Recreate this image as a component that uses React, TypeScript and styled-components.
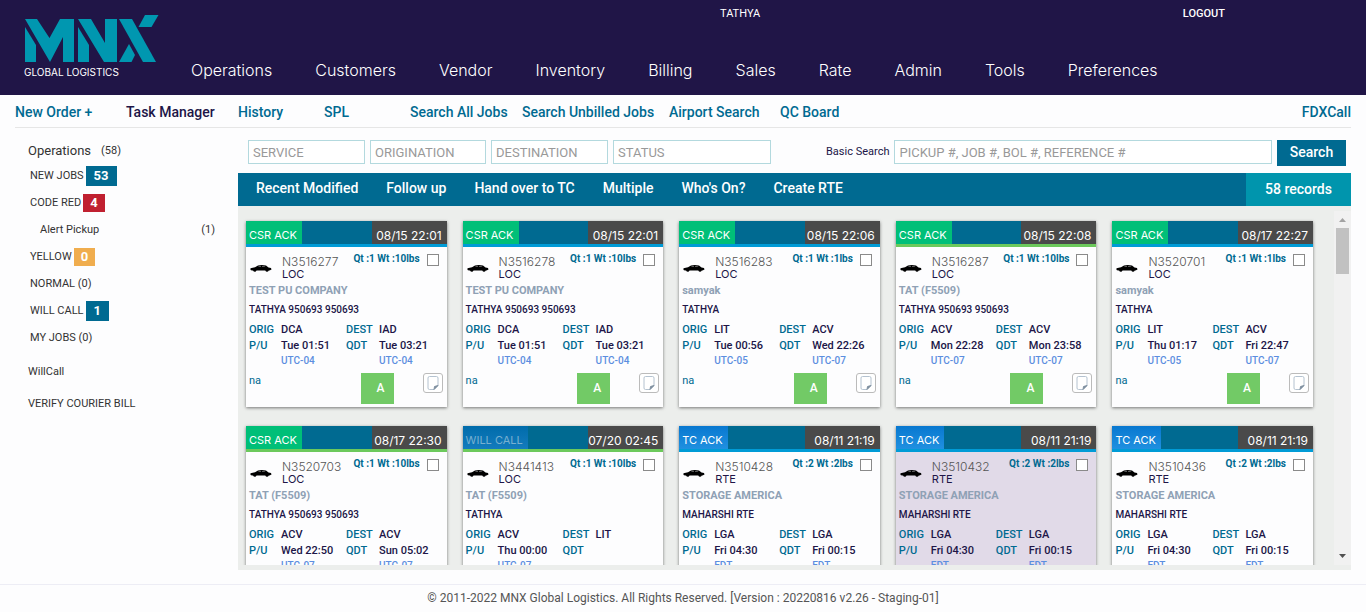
import React from 'react';
import styled, { createGlobalStyle } from 'styled-components';

const GlobalStyle = createGlobalStyle`
  *, *::before, *::after { box-sizing: border-box; }
  body { margin: 0; background: #fdfdfe; color: #201547; font-family: Roboto, sans-serif; font-size: 12px; }
  a { color: inherit; text-decoration: none; }
  button, input { font-family: inherit; margin: 0; border-radius: 0; }
  ul { list-style: none; margin: 0; padding: 0; }
`;

const techFont = 'Inter, "Open Sans", sans-serif';
const blue = '#006a91';

const Page = styled.div`
  display: flex;
  flex-direction: column;
  height: 100vh;
  min-height: 400px;
`;

const Header = styled.header`
  display: grid;
  grid-template-columns: 191px 1fr;
  flex: none;
  height: 95px;
  background: #201547;
  color: #fff;
`;

const LogoLink = styled.a`
  display: flex;
  flex-direction: column;
  padding: 15px 0 0 24px;
`;

const LogoMark = styled.svg`
  display: block;
  width: 136px;
  height: 48px;
`;

const Tagline = styled.span`
  margin-top: 2px;
  font-family: ${techFont};
  font-size: 10px;
  line-height: 14px;
`;

const HeaderMain = styled.div`
  display: flex;
  flex-direction: column;
`;

const AccountBar = styled.div`
  display: flex;
  justify-content: space-between;
  padding: 6px 141px 0 529px;
  font-size: 11px;
  line-height: 15px;
`;

const LogoutLink = styled.a`
  font-weight: 500;
`;

const MainNav = styled.nav`
  display: flex;
  gap: 43px;
  margin-top: 39px;
  font-family: ${techFont};
  font-size: 16px;
  font-weight: 300;
  line-height: 20px;
`;

const SubNav = styled.nav`
  display: grid;
  grid-template-columns: 111px 112px 86px 86px 112px 147px 111px 1fr auto;
  flex: none;
  height: 33px;
  margin: 0 15px;
  border-bottom: 1px solid #e6e6e6;
  color: ${blue};
  font-size: 14px;
  font-weight: 500;
  line-height: 34px;
  white-space: nowrap;
`;

const SubLink = styled.a<{ $active?: boolean }>`
  color: ${p => (p.$active ? '#201547' : blue)};
`;

const Body = styled.div`
  display: grid;
  grid-template-columns: 223px 1fr;
  flex: 1;
  min-height: 0;
  padding: 0 15px;
`;

const Sidebar = styled.aside`
  padding: 12px 23px 0 13px;
  font-size: 11px;
  color: #333;
`;

const SideTitle = styled.a`
  display: flex;
  gap: 10px;
  align-items: center;
  height: 20px;
  font-size: 13px;
`;

const SideCount = styled.span`
  font-size: 11px;
`;

const QueueList = styled.ul`
  padding: 2px 0 0 2px;
`;

const QueueItem = styled.li<{ $nested?: boolean }>`
  display: flex;
  align-items: center;
  justify-content: ${p => (p.$nested ? 'space-between' : 'flex-start')};
  gap: 2px;
  height: 27px;
  padding-left: ${p => (p.$nested ? '10px' : '0')};
`;

const Badge = styled.span<{ $color: string; $large?: boolean }>`
  padding: 0 ${p => (p.$large ? '8px' : '7px')};
  background: ${p => p.$color};
  color: #fff;
  font-size: 13px;
  font-weight: 700;
  line-height: ${p => (p.$large ? '20px' : '18px')};
`;

const SideLink = styled.a`
  display: block;
  margin-top: 4px;
  line-height: 34px;
  height: 28px;
`;

const Content = styled.main`
  display: flex;
  flex-direction: column;
  min-width: 0;
  min-height: 0;
`;

const FilterBar = styled.form`
  display: flex;
  flex: none;
  gap: 5px;
  height: 45px;
  padding: 12px 5px 0 10px;
`;

const TextField = styled.input<{ $width?: string }>`
  flex: ${p => (p.$width ? '0 1 ' + p.$width : '1 1 0')};
  width: 0;
  height: 24px;
  padding: 0 4px;
  border: 1px solid #b3d9de;
  background: #fff;
  font-size: 13px;
  outline: none;
  &::placeholder { color: #999; opacity: 1; }
`;

const SearchLabel = styled.label`
  margin-left: 50px;
  font-size: 11px;
  line-height: 24px;
`;

const SearchButton = styled.button`
  width: 69px;
  height: 26px;
  padding: 0 0 2px;
  border: 0;
  background: ${blue};
  color: #fff;
  font-size: 14px;
  font-weight: 500;
`;

const Toolbar = styled.div`
  display: flex;
  flex: none;
  height: 33px;
  padding-left: 18px;
  gap: 28px;
  background: ${blue};
`;

const ToolButton = styled.button`
  padding: 0 0 3px;
  border: 0;
  background: none;
  color: #fff;
  font-size: 14px;
  font-weight: 500;
`;

const Records = styled.div`
  width: 105px;
  margin-left: auto;
  background: #0095ad;
  color: #fff;
  font-size: 14px;
  font-weight: 500;
  line-height: 32px;
  text-align: center;
`;

const Board = styled.section`
  display: flex;
  flex: 1;
  min-height: 0;
  padding: 5px 0;
  background: #eceeec;
`;

const CardGrid = styled.div`
  display: grid;
  flex: 1;
  grid-template-columns: repeat(5, minmax(0, 1fr));
  align-content: start;
  gap: 19px 16px;
  padding: 10px 21px 10px 8px;
  overflow-y: auto;
  scrollbar-width: none;
`;

const Rail = styled.div`
  display: flex;
  flex-direction: column;
  align-items: center;
  width: 17px;
  background: #f1f1f1;
`;

const Arrow = styled.svg`
  flex: none;
  width: 17px;
  height: 17px;
`;

const Thumb = styled.div`
  width: 13px;
  height: 46px;
  margin-bottom: auto;
  background: #c1c1c1;
`;

const Card = styled.article<{ $tinted?: boolean }>`
  height: 186px;
  background: ${p => (p.$tinted ? '#e1dae8' : '#fdfdfe')};
  box-shadow: 0 1px 3px rgba(0, 0, 0, 0.5);
`;

const CardHead = styled.div<{ $line: string }>`
  display: flex;
  justify-content: space-between;
  height: 26px;
  border-bottom: 3px solid ${p => p.$line};
  background: ${blue};
  font-family: ${techFont};
  font-size: 12px;
  line-height: 28px;
  color: #fff;
  white-space: nowrap;
`;

const Status = styled.span<{ $kind: string }>`
  padding: 0 5px 0 3px;
  font-size: 11px;
  background: ${p => (p.$kind === 'CSR ACK' ? '#00bf78' : p.$kind === 'TC ACK' ? 'linear-gradient(#0878d0, #2090e0)' : 'linear-gradient(#006cab, #147bbd)')};
  color: ${p => (p.$kind === 'WILL CALL' ? '#78b0d0' : '#fff')};
`;

const Stamp = styled.time`
  width: 75px;
  padding: 1px 5px 0 0;
  background: #4a4a4a;
  text-align: right;
`;

const JobRow = styled.div`
  display: grid;
  grid-template-columns: 32px 1fr auto 13px;
  height: 34px;
  padding: 7px 7px 0 4px;
`;

const Car = styled.svg`
  width: 22px;
  height: 10px;
  margin-top: 10px;
`;

const JobId = styled.a`
  display: block;
  font-family: ${techFont};
  font-size: 12px;
  font-weight: 300;
  line-height: 13px;
  color: #555;
  margin-top: 1px;
`;

const JobKind = styled.span`
  display: block;
  font-family: ${techFont};
  font-size: 11px;
  line-height: 13px;
`;

const Weight = styled.span`
  margin-right: 7px;
  color: ${blue};
  font-size: 10px;
  font-weight: 700;
  line-height: 10px;
`;

const Check = styled.input`
  appearance: none;
  width: 12px;
  height: 12px;
  border: 1px solid #8a8a8a;
  background: #fff;
`;

const Company = styled.div`
  padding-left: 3px;
  color: #8fa1b5;
  font-size: 11px;
  font-weight: 700;
  line-height: 19px;
`;

const Contact = styled.div`
  padding-left: 3px;
  font-size: 10px;
  font-weight: 500;
  line-height: 20px;
`;

const Route = styled.dl`
  display: grid;
  grid-template-columns: 32px 65px 33px 1fr;
  grid-template-rows: 16px 16px 14px;
  margin: 0;
  padding: 2px 0 0 3px;
  font-size: 11px;
  font-weight: 500;
  line-height: 16px;
  white-space: nowrap;
`;

const Term = styled.dt`
  color: ${blue};
`;

const Value = styled.dd`
  margin: 0;
`;

const Zone = styled.dd`
  margin: 0;
  color: #5c8ee0;
  font-size: 10px;
  line-height: 14px;
`;

const CardFoot = styled.div`
  display: flex;
  justify-content: space-between;
  padding: 5px 4px 0 3px;
  color: ${blue};
  font-size: 11px;
`;

const Remark = styled.span`
  flex: 1;
  line-height: 16px;
`;

const AssignButton = styled.button`
  width: 33px;
  height: 31px;
  margin-right: 29px;
  padding: 0 0 2px 7px;
  border: 0;
  background: #72ca66;
  color: #fff;
  font-size: 12px;
  font-weight: 500;
`;

const NoteButton = styled.button`
  display: grid;
  place-items: center;
  width: 20px;
  height: 20px;
  padding: 0;
  border: 1px solid #bbb;
  border-radius: 3px;
  background: #fff;
`;

const Footer = styled.footer`
  flex: none;
  height: 28px;
  margin-top: 14px;
  border-top: 1px solid #ededf5;
  color: #555;
  font-size: 12px;
  line-height: 27px;
  text-align: center;
`;

type Job = {
  status: string; line: string; date: string; id: string; kind: string; weight: string;
  company: string; contact: string; orig: string; dest: string; pu: string; qdt: string;
  zoneA: string; zoneB: string; tinted?: boolean;
};

const cyan = '#009bd6';
const green = '#6cc95c';
const make = (
  status: string, line: string, date: string, id: string, kind: string, weight: string, company: string,
  contact: string, orig: string, dest: string, pu: string, qdt: string, zoneA: string, zoneB: string, tinted = false,
): Job => ({ status, line, date, id, kind, weight, company, contact, orig, dest, pu, qdt, zoneA, zoneB, tinted });

const jobs: Job[] = [
  make('CSR ACK', cyan, '08/15 22:01', 'N3516277', 'LOC', 'Qt :1 Wt :10lbs', 'TEST PU COMPANY', 'TATHYA 950693 950693', 'DCA', 'IAD', 'Tue 01:51', 'Tue 03:21', 'UTC-04', 'UTC-04'),
  make('CSR ACK', cyan, '08/15 22:01', 'N3516278', 'LOC', 'Qt :1 Wt :10lbs', 'TEST PU COMPANY', 'TATHYA 950693 950693', 'DCA', 'IAD', 'Tue 01:51', 'Tue 03:21', 'UTC-04', 'UTC-04'),
  make('CSR ACK', cyan, '08/15 22:06', 'N3516283', 'LOC', 'Qt :1 Wt :1lbs', 'samyak', 'TATHYA', 'LIT', 'ACV', 'Tue 00:56', 'Wed 22:26', 'UTC-05', 'UTC-07'),
  make('CSR ACK', green, '08/15 22:08', 'N3516287', 'LOC', 'Qt :1 Wt :10lbs', 'TAT (F5509)', 'TATHYA 950693 950693', 'ACV', 'ACV', 'Mon 22:28', 'Mon 23:58', 'UTC-07', 'UTC-07'),
  make('CSR ACK', cyan, '08/17 22:27', 'N3520701', 'LOC', 'Qt :1 Wt :1lbs', 'samyak', 'TATHYA', 'LIT', 'ACV', 'Thu 01:17', 'Fri 22:47', 'UTC-05', 'UTC-07'),
  make('CSR ACK', green, '08/17 22:30', 'N3520703', 'LOC', 'Qt :1 Wt :10lbs', 'TAT (F5509)', 'TATHYA 950693 950693', 'ACV', 'ACV', 'Wed 22:50', 'Sun 05:02', 'UTC-07', 'UTC-07'),
  make('WILL CALL', green, '07/20 02:45', 'N3441413', 'LOC', 'Qt :1 Wt :10lbs', 'TAT (F5509)', 'TATHYA', 'ACV', 'LIT', 'Thu 00:00', '', 'UTC-07', ''),
  make('TC ACK', cyan, '08/11 21:19', 'N3510428', 'RTE', 'Qt :2 Wt :2lbs', 'STORAGE AMERICA', 'MAHARSHI RTE', 'LGA', 'LGA', 'Fri 04:30', 'Fri 00:15', 'EDT', 'EDT'),
  make('TC ACK', cyan, '08/11 21:19', 'N3510432', 'RTE', 'Qt :2 Wt :2lbs', 'STORAGE AMERICA', 'MAHARSHI RTE', 'LGA', 'LGA', 'Fri 04:30', 'Fri 00:15', 'EDT', 'EDT', true),
  make('TC ACK', cyan, '08/11 21:19', 'N3510436', 'RTE', 'Qt :2 Wt :2lbs', 'STORAGE AMERICA', 'MAHARSHI RTE', 'LGA', 'LGA', 'Fri 04:30', 'Fri 00:15', 'EDT', 'EDT'),
];

const CarIcon = () => (
  <Car viewBox="0 0 22 10" aria-hidden="true">
    <path d="M0.500 4.200 5 3.200 8 1.500Q12 .6 16 1.600L18.500 3.400 21 4 21.500 5.600 19.500 6.600H2L0.500 6Z" />
    <circle cx="4.800" cy="6.300" r="1.500" />
    <circle cx="17" cy="6.300" r="1.500" />
    <path d="M7.800 3.100 9.200 2.200H11V3.100ZM12 2.200h2.300L15.500 3.100H12Z" fill="#777" />
  </Car>
);

const JobCard = ({ job }: { job: Job }) => (
  <Card $tinted={job.tinted}>
    <CardHead $line={job.line}>
      <Status $kind={job.status}>{job.status}</Status>
      <Stamp>{job.date}</Stamp>
    </CardHead>
    <JobRow>
      <CarIcon />
      <div>
        <JobId href="#">{job.id}</JobId>
        <JobKind>{job.kind}</JobKind>
      </div>
      <Weight>{job.weight}</Weight>
      <Check type="checkbox" aria-label={'Select ' + job.id} />
    </JobRow>
    <Company>{job.company}</Company>
    <Contact>{job.contact}</Contact>
    <Route>
      <Term>ORIG</Term><Value>{job.orig}</Value>
      <Term>DEST</Term><Value>{job.dest}</Value>
      <Term>P/U</Term><Value>{job.pu}</Value>
      <Term>QDT</Term><Value>{job.qdt}</Value>
      <Term /><Zone>{job.zoneA}</Zone>
      <Term /><Zone>{job.zoneB}</Zone>
    </Route>
    <CardFoot>
      <Remark>na</Remark>
      <AssignButton type="button">A</AssignButton>
      <NoteButton type="button" aria-label="Notes">
        <svg width="12" height="14" viewBox="0 0 12 14" fill="none" stroke="#b4c2d0">
          <path d="M2.500.5h7a1.500 1.500 0 0 1 1.500 1.500v7.500l-4 4H2.500A1.500 1.500 0 0 1 1 12V2A1.500 1.500 0 0 1 2.500.5Z" />
          <path d="M7 13.500 7.500 10.500 11 9.500Z" fill="#6d7f91" stroke="#8292a2" />
        </svg>
      </NoteButton>
    </CardFoot>
  </Card>
);

const sections = ['Operations', 'Customers', 'Vendor', 'Inventory', 'Billing', 'Sales', 'Rate', 'Admin', 'Tools', 'Preferences'];
const subSections = ['New Order +', 'Task Manager', 'History', 'SPL', 'Search All Jobs', 'Search Unbilled Jobs', 'Airport Search', 'QC Board', 'FDXCall'];
const tools = ['Recent Modified', 'Follow up', 'Hand over to TC', 'Multiple', "Who's On?", 'Create RTE'];

export default function App() {
  return (
    <>
      <GlobalStyle />
      <Page>
        <Header>
          <LogoLink href="#" aria-label="MNX Global Logistics">
            <LogoMark viewBox="0 0 136 48" fill="#0097b0">
              <path d="M1 4H13L25.500 23 36 4H50V47H39V22L26 47Z" />
              <path d="M1 12 12 30V47H1Z" />
              <path d="M54 4H67L81 28V4H93V47H80Z" />
              <path d="M54 12 65 30V47H54Z" />
              <path d="M95 4H108L132 47H119Z" />
              <path d="M121 0H134.500L127.500 12H114.500Z" />
              <path d="M105 29 111 40 107.500 47H95Z" />
            </LogoMark>
            <Tagline>GLOBAL LOGISTICS</Tagline>
          </LogoLink>
          <HeaderMain>
            <AccountBar>
              <span>TATHYA</span>
              <LogoutLink href="#">LOGOUT</LogoutLink>
            </AccountBar>
            <MainNav>
              {sections.map(s => <a key={s} href="#">{s}</a>)}
            </MainNav>
          </HeaderMain>
        </Header>
        <SubNav>
          {subSections.map(s => <SubLink key={s} href="#" $active={s === 'Task Manager'}>{s}</SubLink>)}
        </SubNav>
        <Body>
          <Sidebar>
            <SideTitle href="#">Operations <SideCount>(58)</SideCount></SideTitle>
            <QueueList>
              <QueueItem><a href="#">NEW JOBS</a><Badge $color={blue} $large>53</Badge></QueueItem>
              <QueueItem><a href="#">CODE RED</a><Badge $color="#c02030">4</Badge></QueueItem>
              <QueueItem $nested><a href="#">Alert Pickup</a><SideCount>(1)</SideCount></QueueItem>
              <QueueItem><a href="#">YELLOW</a><Badge $color="#f0ad4e">0</Badge></QueueItem>
              <QueueItem><a href="#">NORMAL (0)</a></QueueItem>
              <QueueItem><a href="#">WILL CALL</a><Badge $color={blue} $large>1</Badge></QueueItem>
              <QueueItem><a href="#">MY JOBS (0)</a></QueueItem>
            </QueueList>
            <SideLink href="#">WillCall</SideLink>
            <SideLink href="#">VERIFY COURIER BILL</SideLink>
          </Sidebar>
          <Content>
            <FilterBar onSubmit={e => e.preventDefault()}>
              <TextField $width="117px" placeholder="SERVICE" aria-label="Service" />
              <TextField $width="116px" placeholder="ORIGINATION" aria-label="Origination" />
              <TextField $width="117px" placeholder="DESTINATION" aria-label="Destination" />
              <TextField $width="158px" placeholder="STATUS" aria-label="Status" />
              <SearchLabel htmlFor="basic-search">Basic Search</SearchLabel>
              <TextField id="basic-search" placeholder="PICKUP #, JOB #, BOL #, REFERENCE #" />
              <SearchButton type="submit">Search</SearchButton>
            </FilterBar>
            <Toolbar>
              {tools.map(t => <ToolButton key={t} type="button">{t}</ToolButton>)}
              <Records>58 records</Records>
            </Toolbar>
            <Board>
              <CardGrid>
                {jobs.map(job => <JobCard key={job.id} job={job} />)}
              </CardGrid>
              <Rail aria-hidden="true">
                <Arrow viewBox="0 0 17 17"><path d="M5 11 8.500 7 12 11Z" fill="#a3a3a3" /></Arrow>
                <Thumb />
                <Arrow viewBox="0 0 17 17"><path d="M5 6 8.500 10 12 6Z" fill="#505050" /></Arrow>
              </Rail>
            </Board>
          </Content>
        </Body>
        <Footer>© 2011-2022 MNX Global Logistics. All Rights Reserved. [Version : 20220816 v2.26 - Staging-01]</Footer>
      </Page>
    </>
  );
}
